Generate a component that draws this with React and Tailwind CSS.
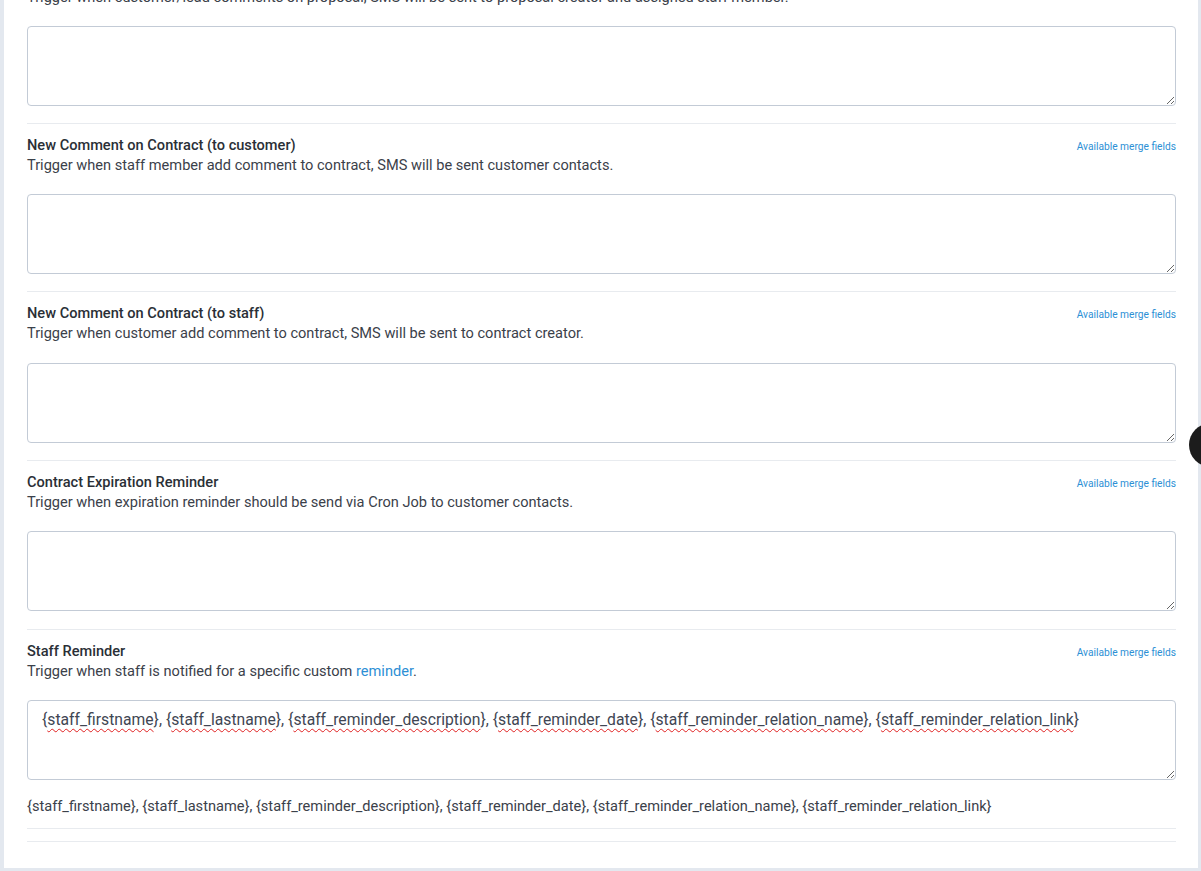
import React from "react";

const sections = [
  {
    title: "New Comment on Contract (to customer)",
    desc: "Trigger when staff member add comment to contract, SMS will be sent customer contacts.",
    mt: "mt-[17px]",
    amt: "mt-[19px]",
  },
  {
    title: "New Comment on Contract (to staff)",
    desc: "Trigger when customer add comment to contract, SMS will be sent to contract creator.",
    mt: "mt-[17px]",
    amt: "mt-[20px]",
  },
  {
    title: "Contract Expiration Reminder",
    desc: "Trigger when expiration reminder should be send via Cron Job to customer contacts.",
    mt: "mt-[17px]",
    amt: "mt-[19px]",
  },
];

const fields = [
  "staff_firstname",
  "staff_lastname",
  "staff_reminder_description",
  "staff_reminder_date",
  "staff_reminder_relation_name",
  "staff_reminder_relation_link",
];

function Area({ children }) {
  return (
    <div className="h-[80px] w-full resize-y overflow-auto rounded-[4px] border border-[#c3cbd6] bg-white px-[14px] py-[8px] text-[15.7px] leading-[22px] text-[#3f4653]">
      {children}
    </div>
  );
}

function Header({ title, children }) {
  return (
    <>
      <div className="flex items-start justify-between">
        <div className="text-[14.6px] font-medium leading-[20px] text-[#2a2f36]">{title}</div>
        <a className="pt-[4px] text-[10.2px] leading-[16px] text-[#2d8fd5]">Available merge fields</a>
      </div>
      <div className="text-[14.6px] leading-[20px] text-[#3b414a]">{children}</div>
    </>
  );
}

export default function App() {
  return (
    <div
      className="relative h-[871px] w-[1201px] overflow-hidden bg-[#e3e8ef]"
      style={{ fontFamily: "Roboto, 'Liberation Sans', sans-serif" }}
    >
      <div className="ml-[4px] mr-[3px] flex h-[868px] flex-col bg-white pl-[23px] pr-[22px]">
        <div className="-mt-[13px] text-[14.6px] leading-[20px] text-[#3b414a]">
          Trigger when customer/lead comments on proposal, SMS will be sent to proposal creator and assigned staff member.
        </div>
        <div className="mt-[19px]">
          <Area />
        </div>
        {sections.map((s, i) => (
          <div key={i} className={`${s.mt} border-t border-[#e8ebef] pt-[11px]`}>
            <Header title={s.title}>{s.desc}</Header>
            <div className={s.amt}>
              <Area />
            </div>
          </div>
        ))}
        <div className="mt-[18px] border-t border-[#e8ebef] pt-[11px]">
          <Header title="Staff Reminder">
            Trigger when staff is notified for a specific custom <a className="text-[#2d8fd5]">reminder</a>.
          </Header>
          <div className="mt-[19px]">
            <Area>
              {fields.map((f, i) => (
                <span key={f}>
                  {"{"}
                  <span className="underline decoration-[#e02020] decoration-wavy decoration-1 underline-offset-[3px]">{f}</span>
                  {"}"}
                  {i < fields.length - 1 ? ", " : ""}
                </span>
              ))}
            </Area>
          </div>
          <div className="mt-[16px] text-[14.6px] leading-[20px] text-[#3b414a]">
            {fields.map((f) => `{${f}}`).join(", ")}
          </div>
          <div className="mt-[12px] border-t border-[#e8ebef]" />
          <div className="mt-[12px] border-t border-[#e8ebef]" />
        </div>
      </div>
      <div className="absolute left-[1189px] top-[423px] h-[44px] w-[44px] rounded-full bg-[#1c1c1c]" />
    </div>
  );
}
